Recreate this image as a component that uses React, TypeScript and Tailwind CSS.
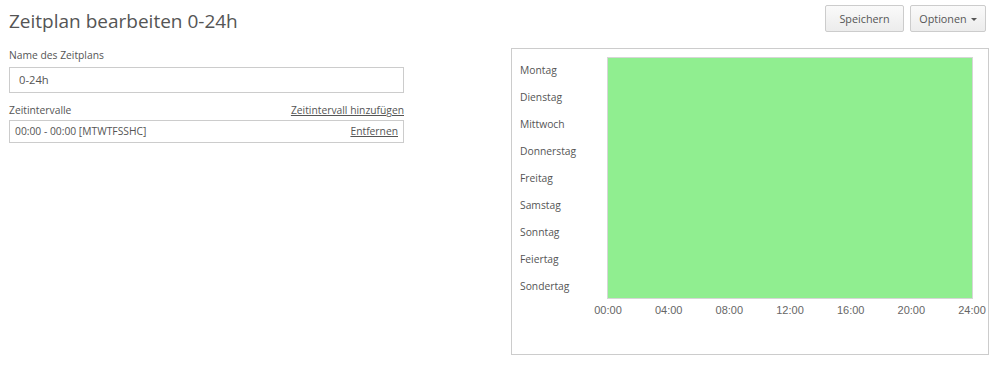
import React from "react";

const days = ["Montag","Dienstag","Mittwoch","Donnerstag","Freitag","Samstag","Sonntag","Feiertag","Sondertag"];
const ticks = ["00:00","04:00","08:00","12:00","16:00","20:00","24:00"];

function Chart() {
  const x0 = 96, x1 = 460;
  return (
    <svg width="476" height="305" className="block">
      <rect x={x0 - 0.5} y={8.5} width={x1 - x0 + 1} height={241} fill="#90ee90" stroke="#d6d6d6" strokeWidth={1} />
      {days.map((d, i) => (
        <text key={d} x={8} y={21 + i * 27} dominantBaseline="central" fontFamily="'Open Sans', sans-serif" fontSize={10.3} fill="#555">{d}</text>
      ))}
      {ticks.map((t, i) => (
        <text key={t} x={x0 + ((x1 - x0) * i) / 6} y={261} dominantBaseline="central" textAnchor="middle" fontFamily="'Liberation Sans', Arial, sans-serif" fontSize={11} fill="#666">{t}</text>
      ))}
    </svg>
  );
}

export default function App() {
  return (
    <div className="w-[1000px] h-[366px] bg-white text-[#555] font-['Open_Sans',sans-serif] overflow-hidden">
      <div className="flex items-start justify-between pl-[9px] pr-[14px] pt-[5px] h-[43px]">
        <h1 className="text-[19px] leading-[30px] pt-[1px] text-[#555] font-normal">Zeitplan bearbeiten 0-24h</h1>
        <div className="flex gap-[6px]">
          <button className="h-[27px] w-[79px] pt-[2px] border border-[#ccc] rounded-[2px] bg-gradient-to-b from-[#fafafa] to-[#ececec] text-[10.8px] text-[#555]">Speichern</button>
          <button className="h-[27px] w-[76px] pt-[2px] border border-[#ccc] rounded-[2px] bg-gradient-to-b from-[#fafafa] to-[#ececec] text-[10.8px] text-[#555] flex items-center justify-center gap-[4px]">
            Optionen
            <span className="inline-block w-0 h-0 border-l-[3px] border-r-[3px] border-t-[3px] border-l-transparent border-r-transparent border-t-[#555]" />
          </button>
        </div>
      </div>
      <div className="flex pl-[9px]">
        <div className="w-[395px] pt-[4px]">
          <div className="text-[10.3px] leading-[16px]">Name des Zeitplans</div>
          <div className="mt-[4px] h-[26px] border border-[#ccc] flex items-center px-[9px] text-[11.2px]">0-24h</div>
          <div className="mt-[9px] flex justify-between text-[10.3px] leading-[16px]">
            <span>Zeitintervalle</span>
            <a className="underline cursor-pointer">Zeitintervall hinzufügen</a>
          </div>
          <div className="mt-[2px] h-[23px] border border-[#ccc] flex items-center justify-between px-[5px] text-[10.3px]">
            <span>00:00 - 00:00 [MTWTFSSHC]</span>
            <a className="underline cursor-pointer">Entfernen</a>
          </div>
        </div>
        <div className="ml-[107px] mt-[5px] w-[478px] h-[307px] border border-[#ccc]">
          <Chart />
        </div>
      </div>
    </div>
  );
}
